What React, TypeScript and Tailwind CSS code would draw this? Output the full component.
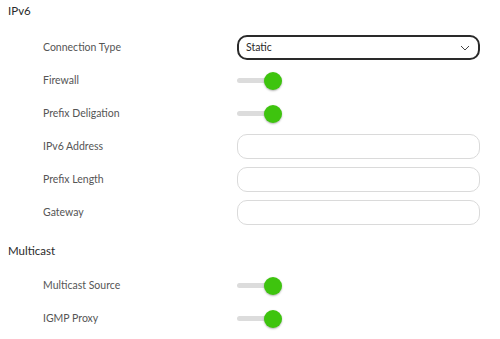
import React from "react";

function Toggle() {
  return (
    <div className="relative w-[46px] h-[18px] flex items-center">
      <div className="w-[30px] h-[5px] rounded-full bg-[#dcdcdc]" />
      <div className="absolute left-[27px] top-0 w-[18px] h-[18px] rounded-full bg-[#3ec40e] shadow-[0_1px_2px_rgba(0,0,0,0.3)]" />
    </div>
  );
}

function Row({ label, children }: { label: string; children: React.ReactNode }) {
  return (
    <div className="flex items-center h-[33px]">
      <div className="w-[237px] shrink-0 pl-[43px] text-[10.5px] text-[#555]">{label}</div>
      <div className="flex-1 flex items-center">{children}</div>
    </div>
  );
}

function Input() {
  return <div className="w-[243px] h-[25px] rounded-[10px] border border-[#dadada] bg-white" />;
}

export default function App() {
  return (
    <div className="w-[500px] h-[339px] bg-white overflow-hidden" style={{ fontFamily: "Lato, 'Liberation Sans', sans-serif" }}>
      <div className="pl-[8px] pt-[3px] h-[15px] text-[11.5px] text-[#2a2a2a] leading-[15px]">IPv6</div>
      <div className="h-[16px]" />
      <Row label="Connection Type">
        <div className="w-[243px] h-[25px] rounded-[10px] border-2 border-[#2a2a2a] flex items-center justify-between pl-[7px] pr-[8px] text-[10.5px] text-[#2a2a2a]">
          <span>Static</span>
          <svg width="10" height="6" viewBox="0 0 10 6" fill="none" stroke="#444" strokeWidth="1"><path d="M1 1l4 4 4-4" /></svg>
        </div>
      </Row>
      <Row label="Firewall"><Toggle /></Row>
      <Row label="Prefix Deligation"><Toggle /></Row>
      <Row label="IPv6 Address"><Input /></Row>
      <Row label="Prefix Length"><Input /></Row>
      <Row label="Gateway"><Input /></Row>
      <div className="pl-[8px] pt-[14px] h-[34px] text-[11.5px] text-[#2a2a2a] leading-[15px]">Multicast</div>
      <div className="h-[6px]" />
      <Row label="Multicast Source"><Toggle /></Row>
      <Row label="IGMP Proxy"><Toggle /></Row>
    </div>
  );
}
